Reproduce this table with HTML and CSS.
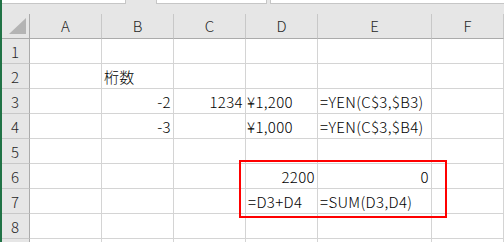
FILE: index.html
```html
<!DOCTYPE html>
<html lang="ja">
<head>
<meta charset="utf-8">
<title>YEN関数</title>
<link rel="stylesheet" href="styles.css">
</head>
<body>
<div class="window">
  <div class="topbar">
    <div class="field name-box"></div>
    <div class="field tab"></div>
    <div class="field formula"></div>
  </div>
  <div class="sheet">
    <div class="corner"><span class="tri"></span></div>
    <div class="colhead">A</div>
    <div class="colhead">B</div>
    <div class="colhead">C</div>
    <div class="colhead">D</div>
    <div class="colhead">E</div>
    <div class="colhead">F</div>

    <div class="rowhead">1</div>
    <div class="cell"></div><div class="cell"></div><div class="cell"></div><div class="cell"></div><div class="cell"></div><div class="cell"></div>

    <div class="rowhead">2</div>
    <div class="cell"></div><div class="cell">桁数</div><div class="cell"></div><div class="cell"></div><div class="cell"></div><div class="cell"></div>

    <div class="rowhead">3</div>
    <div class="cell"></div><div class="cell num">-2</div><div class="cell num">1234</div><div class="cell yen">¥1,200</div><div class="cell">=YEN(C$3,$B3)</div><div class="cell"></div>

    <div class="rowhead">4</div>
    <div class="cell"></div><div class="cell num">-3</div><div class="cell"></div><div class="cell yen">¥1,000</div><div class="cell">=YEN(C$3,$B4)</div><div class="cell"></div>

    <div class="rowhead">5</div>
    <div class="cell"></div><div class="cell"></div><div class="cell"></div><div class="cell"></div><div class="cell"></div><div class="cell"></div>

    <div class="rowhead">6</div>
    <div class="cell"></div><div class="cell"></div><div class="cell"></div><div class="cell num">2200</div><div class="cell num">0</div><div class="cell"></div>

    <div class="rowhead">7</div>
    <div class="cell"></div><div class="cell"></div><div class="cell"></div><div class="cell">=D3+D4</div><div class="cell">=SUM(D3,D4)</div><div class="cell"></div>

    <div class="rowhead">8</div>
    <div class="cell"></div><div class="cell"></div><div class="cell"></div><div class="cell"></div><div class="cell"></div><div class="cell"></div>

    <div class="rowhead"></div>
    <div class="cell"></div><div class="cell"></div><div class="cell"></div><div class="cell"></div><div class="cell"></div><div class="cell"></div>

    <div class="highlight"></div>
  </div>
</div>
</body>
</html>
```

FILE: styles.css
```css
html, body {
  margin: 0;
  padding: 0;
  background: #ffffff;
}

.window {
  width: 504px;
  height: 242px;
  overflow: hidden;
  border-left: 2px solid #217346;
  box-sizing: border-box;
  background: #e6e6e6;
  font-family: "Noto Sans CJK JP", "Noto Sans", sans-serif;
  font-size: 15px;
  color: #000000;
}

/* strip of the formula bar above the grid */
.topbar {
  display: flex;
  height: 14px;
}

.field {
  height: 3px;
  background: #ffffff;
  border-bottom: 1px solid #c6c6c6;
  border-right: 1px solid #c6c6c6;
}

.name-box {
  width: 123px;
}

.tab {
  width: 109px;
  margin-left: 30px;
  border-left: 1px solid #c6c6c6;
}

.formula {
  flex: 1;
  margin-left: 3px;
  border-left: 1px solid #c6c6c6;
  border-right: none;
}

/* worksheet grid */
.sheet {
  position: relative;
  display: grid;
  grid-template-columns: 28px 72px 72px 72px 72px 114px 72px;
  grid-auto-rows: 25px;
  background: #ffffff;
}

.corner,
.colhead,
.rowhead {
  background: #e6e6e6;
  color: #262626;
  box-sizing: border-box;
  font-weight: 300;
}

.corner {
  position: relative;
  border-right: 1px solid #ababab;
  border-bottom: 1px solid #ababab;
}

.corner .tri {
  position: absolute;
  left: 7px;
  top: 4px;
  width: 0;
  height: 0;
  border-left: 17px solid transparent;
  border-bottom: 16px solid #b4b4b4;
}

.colhead {
  display: flex;
  align-items: center;
  justify-content: center;
  border-right: 1px solid #c8c8c8;
  border-bottom: 1px solid #ababab;
  padding-bottom: 1px;
}

.rowhead {
  display: flex;
  align-items: center;
  justify-content: center;
  border-right: 1px solid #ababab;
  border-bottom: 1px solid #c8c8c8;
  padding-right: 1px;
}

.cell {
  box-sizing: border-box;
  border-right: 1px solid #d4d4d4;
  border-bottom: 1px solid #d4d4d4;
  display: flex;
  align-items: center;
  padding: 0 2px 0 2px;
  white-space: nowrap;
  overflow: visible;
  font-weight: 300;
  letter-spacing: 0.35px;
}

.cell.num {
  justify-content: flex-end;
  padding-right: 2px;
}

.cell.yen {
  padding-left: 1px;
}

/* red frame around D6:E7 */
.highlight {
  position: absolute;
  left: 237px;
  top: 146px;
  width: 208px;
  height: 58px;
  border: 2px solid #ff0000;
  box-sizing: border-box;
  pointer-events: none;
}
```
